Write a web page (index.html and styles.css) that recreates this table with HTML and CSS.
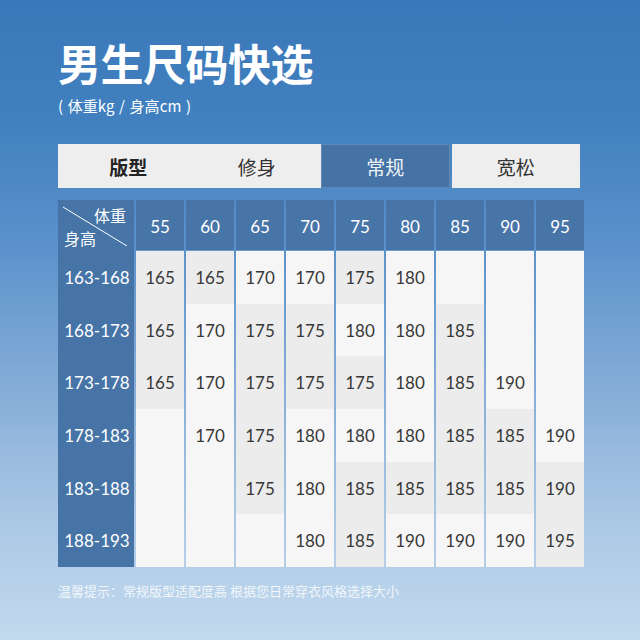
FILE: index.html
```html
<!DOCTYPE html>
<html lang="zh-CN">
<head>
<meta charset="utf-8">
<title>男生尺码快选</title>
<link rel="stylesheet" href="styles.css">
</head>
<body>
<div class="page">
  <h1 class="title">男生尺码快选</h1>
  <p class="subtitle">( 体重kg / 身高cm )</p>

  <div class="tabs">
    <div class="tab tab-label">版型</div>
    <div class="tab">修身</div>
    <div class="tab active">常规</div>
    <div class="tab">宽松</div>
  </div>

  <div class="table">
    <div class="corner">
      <svg class="diag" viewBox="0 0 76 50" preserveAspectRatio="none"><line x1="5" y1="7" x2="69" y2="46" stroke="#ffffff" stroke-width="1"/></svg>
      <span class="c-top">体重</span>
      <span class="c-bottom">身高</span>
    </div>
    <div class="hd">55</div><div class="hd">60</div><div class="hd">65</div><div class="hd">70</div><div class="hd">75</div><div class="hd">80</div><div class="hd">85</div><div class="hd">90</div><div class="hd">95</div>

    <div class="rl">163-168</div>
    <div class="cell g">165</div><div class="cell g">165</div><div class="cell">170</div><div class="cell">170</div><div class="cell g">175</div><div class="cell">180</div><div class="cell"></div><div class="cell"></div><div class="cell"></div>

    <div class="rl">168-173</div>
    <div class="cell g">165</div><div class="cell">170</div><div class="cell g">175</div><div class="cell g">175</div><div class="cell">180</div><div class="cell">180</div><div class="cell g">185</div><div class="cell"></div><div class="cell"></div>

    <div class="rl">173-178</div>
    <div class="cell g">165</div><div class="cell">170</div><div class="cell g">175</div><div class="cell g">175</div><div class="cell g">175</div><div class="cell">180</div><div class="cell g">185</div><div class="cell">190</div><div class="cell"></div>

    <div class="rl">178-183</div>
    <div class="cell"></div><div class="cell">170</div><div class="cell g">175</div><div class="cell">180</div><div class="cell">180</div><div class="cell">180</div><div class="cell g">185</div><div class="cell g">185</div><div class="cell">190</div>

    <div class="rl">183-188</div>
    <div class="cell"></div><div class="cell"></div><div class="cell g">175</div><div class="cell">180</div><div class="cell g">185</div><div class="cell g">185</div><div class="cell g">185</div><div class="cell g">185</div><div class="cell g">190</div>

    <div class="rl">188-193</div>
    <div class="cell"></div><div class="cell"></div><div class="cell"></div><div class="cell">180</div><div class="cell g">185</div><div class="cell">190</div><div class="cell">190</div><div class="cell">190</div><div class="cell g">195</div>
  </div>

  <p class="note">温馨提示：常规版型适配度高 根据您日常穿衣风格选择大小</p>
</div>
</body>
</html>
```
FILE: styles.css
```css
* { box-sizing: border-box; }
html, body { margin: 0; padding: 0; }
body { width: 640px; height: 640px; overflow: hidden; }

.page {
  width: 640px;
  height: 640px;
  padding: 41px 58px 0 58px;
  background: linear-gradient(180deg, #3a78b9 0%, #4281c0 20%, #5a91cb 38%, #84acd7 60%, #a8c6e4 80%, #c3daee 100%);
  font-family: "Noto Sans CJK SC", "Noto Sans", sans-serif;
  color: #ffffff;
}

.title {
  margin: 0;
  font-size: 43px;
  line-height: 43px;
  font-weight: 700;
  letter-spacing: -0.5px;
  color: #ffffff;
}

.subtitle {
  margin: 13px 0 0 0;
  font-size: 15px;
  line-height: 18px;
  font-weight: 400;
  color: #ffffff;
  letter-spacing: 0.1px;
  word-spacing: 1px;
}

.tabs {
  margin-top: 29px;
  height: 44px;
  width: 522px;
  display: flex;
}

.tab {
  flex: 1 1 0;
  display: flex;
  align-items: center;
  justify-content: center;
  background: #eeeeee;
  color: #333333;
  font-size: 19px;
}

.tab-label {
  font-weight: 700;
  color: #222222;
  padding-left: 6px;
}

.tab.active {
  background: #4673a5;
  color: #eef3f8;
  margin-right: 2px;
  box-shadow: inset 0 0 0 1px rgba(255,255,255,0.15);
}

.table {
  margin-top: 12px;
  display: grid;
  grid-template-columns: 76px repeat(9, 48px);
  grid-template-rows: 51px repeat(6, 52.7px);
  column-gap: 2px;
  row-gap: 0;
  font-family: "Lato", "Noto Sans", sans-serif;
  font-weight: 400;
}

.corner {
  position: relative;
  background: #4674a6;
  display: flex;
  flex-direction: column;
  justify-content: space-between;
  padding: 6px 8px 4px 6px;
  font-family: "Noto Sans CJK SC", sans-serif;
  font-weight: 400;
  font-size: 16px;
  line-height: 18px;
  color: #ffffff;
}

.diag {
  position: absolute;
  left: 0;
  top: 0;
  width: 76px;
  height: 50px;
}

.c-top { align-self: flex-end; }
.c-bottom { align-self: flex-start; }

.hd {
  background: #4775a8;
  color: #ffffff;
  font-size: 17px;
  display: flex;
  align-items: center;
  justify-content: center;
  padding-top: 3px;
  border-bottom: 1px solid #6c9ccf;
}

.rl {
  background: #4674a6;
  color: #ffffff;
  font-size: 17px;
  display: flex;
  align-items: center;
  justify-content: center;
  padding-left: 2px;
}

.cell {
  background: #f6f6f6;
  color: #383838;
  font-size: 17px;
  display: flex;
  align-items: center;
  justify-content: center;
}

.cell.g { background: #ececec; }

.note {
  margin: 16px 0 0 0;
  font-size: 13px;
  line-height: 16px;
  color: rgba(255, 255, 255, 0.82);
}
```
